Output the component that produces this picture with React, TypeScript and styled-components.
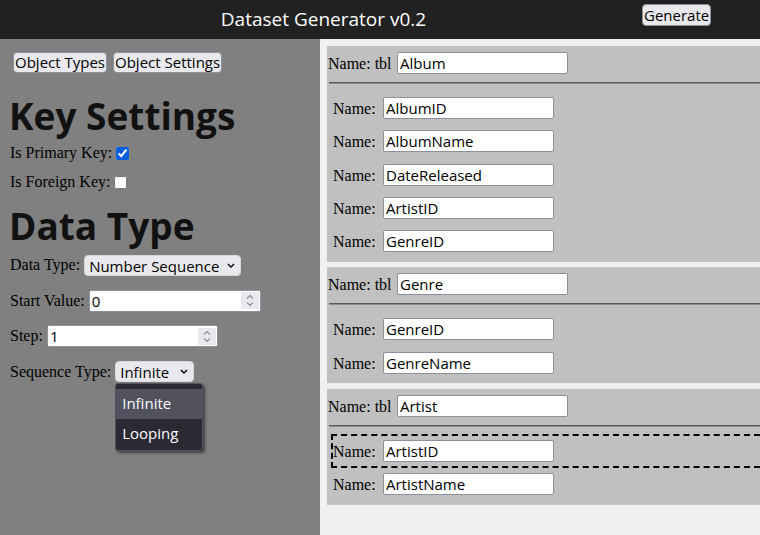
import React from "react";
import styled, { createGlobalStyle } from "styled-components";

const sans = `"Open Sans", "Noto Sans", sans-serif`;

const GlobalStyle = createGlobalStyle`
  html, body { margin: 0; padding: 0; height: 100%; }
  body {
    background: #f0f0f0;
    font-family: "Liberation Serif", "Times New Roman", serif;
    font-size: 16px;
    color: #000;
    overflow: hidden;
  }
  #root { height: 100%; }
  * { box-sizing: border-box; }
`;

const Page = styled.div`
  display: flex;
  flex-direction: column;
  height: 100vh;
  width: 760px;
`;

const Header = styled.header`
  flex: none;
  height: 39px;
  background: #212121;
  display: flex;
  align-items: flex-start;
`;

const Title = styled.h1`
  margin: 0;
  width: 647px;
  text-align: center;
  font-family: ${sans};
  font-weight: 400;
  font-size: 19px;
  line-height: 39px;
  color: #fff;
`;

const Button = styled.button<{ $top?: number; $left?: number; $h?: number }>`
  margin: ${(p) => p.$top ?? 0}px 0 0 ${(p) => p.$left ?? 0}px;
  height: ${(p) => p.$h ?? 21}px;
  padding: 0 1px;
  font-family: ${sans};
  font-size: 15px;
  line-height: 19px;
  color: #000;
  background: #e9e9ed;
  border: 1px solid #8f8f9d;
  border-radius: 4px;
`;

const Body = styled.div`
  flex: 1;
  min-height: 0;
  display: grid;
  grid-template-columns: 320px 1fr;
`;

const Sidebar = styled.aside`
  background: #808080;
  padding: 13px 10px;
`;

const Tabs = styled.div`
  display: flex;
  gap: 6px;
  margin-left: 3px;
`;

const SectionTitle = styled.h2<{ $top: number }>`
  margin: ${(p) => p.$top}px 0 0 -1px;
  font-family: ${sans};
  font-weight: 700;
  font-size: 37px;
  line-height: 40px;
  color: #111;
`;

const CheckRow = styled.div<{ $top: number }>`
  display: flex;
  align-items: center;
  gap: 4px;
  height: 20px;
  margin-top: ${(p) => p.$top}px;
`;

const Label = styled.label`
  line-height: 20px;
  white-space: nowrap;
`;

const Checkbox = styled.input`
  width: 13px;
  height: 13px;
  margin: 0;
  accent-color: #0060df;
`;

const FormRow = styled.div<{ $top: number }>`
  display: flex;
  align-items: center;
  gap: 4px;
  height: 22px;
  margin-top: ${(p) => p.$top}px;
`;

const SelectWrap = styled.div<{ $w: number }>`
  position: relative;
  width: ${(p) => p.$w}px;
  height: 21px;
`;

const Select = styled.select`
  appearance: none;
  width: 100%;
  height: 100%;
  margin: 0;
  padding: 0 0 0 4px;
  font-family: ${sans};
  font-size: 15px;
  color: #000;
  background: #e9e9ed;
  border: 1px solid #d6d6dd;
  border-radius: 4px;
`;

const Chevron = styled.svg`
  position: absolute;
  right: 6px;
  top: 8px;
  pointer-events: none;
`;

const NumberBox = styled.div<{ $w: number }>`
  display: flex;
  align-items: center;
  width: ${(p) => p.$w}px;
  height: 22px;
  padding-right: 1px;
  background: #fff;
  border: 1px solid #8f8f9d;
  border-radius: 2px;
`;

const NumberInput = styled.input`
  flex: 1;
  min-width: 0;
  height: 100%;
  padding: 0 0 0 2px;
  border: 0;
  outline: 0;
  background: transparent;
  font-family: ${sans};
  font-size: 15px;
  color: #000;
`;

const Spinner = styled.span`
  width: 18px;
  height: 17px;
  background: #e9e9ed;
  display: flex;
  flex-direction: column;
  align-items: center;
  justify-content: center;
  gap: 3px;
`;

const Popup = styled.ul`
  position: absolute;
  left: 0;
  top: 22px;
  width: 88px;
  height: 68px;
  margin: 0;
  padding: 5px 0 0;
  list-style: none;
  background: #2b2a33;
  border: 1px solid #55545f;
  border-radius: 3px;
  box-shadow: 2px 2px 3px rgba(0, 0, 0, 0.5);
  font-family: ${sans};
  font-size: 15px;
  color: #fbfbfe;
  z-index: 2;
`;

const PopupOption = styled.li<{ $active?: boolean }>`
  height: 30px;
  line-height: 28px;
  padding-left: 6px;
  background: ${(p) => (p.$active ? "#52525e" : "transparent")};
`;

const Canvas = styled.main`
  padding: 7px 0 0 7px;
  display: flex;
  flex-direction: column;
  gap: 5.5px;
  overflow: hidden;
`;

const Card = styled.section`
  background: #c0c0c0;
  padding: 6px 0 4px 1px;
`;

const CardHeader = styled.div`
  display: flex;
  align-items: baseline;
  height: 22px;
`;

const HeaderLabel = styled.span`
  width: 69px;
  flex: none;
  white-space: nowrap;
`;

const Divider = styled.hr`
  margin: 8px 0 7.5px 1px;
  height: 0;
  border: 0;
  border-top: 1px solid #5a5a5a;
  border-bottom: 1px solid #8c8c8c;
`;

const FieldRow = styled.div<{ $selected?: boolean }>`
  display: flex;
  align-items: baseline;
  margin-left: 3px;
  padding: 3.625px 0;
  border: 2px dashed ${(p) => (p.$selected ? "#000" : "transparent")};
  border-right: 0;
`;

const FieldLabel = styled.span`
  width: 50px;
  flex: none;
`;

const TextInput = styled.input`
  width: 171px;
  height: 22px;
  margin: 0;
  padding: 0 2px;
  font-family: ${sans};
  font-size: 15px;
  color: #000;
  background: #fff;
  border: 1px solid #8f8f9d;
  border-radius: 2px;
`;

const ChevronDown = () => (
  <Chevron width="8" height="5" viewBox="0 0 8 5">
    <polyline points="1,1 4,4 7,1" fill="none" stroke="#000" strokeWidth="1.4" />
  </Chevron>
);

const SpinArrows = () => (
  <Spinner>
    <svg width="8" height="4" viewBox="0 0 8 4">
      <polyline points="1,3.5 4,0.5 7,3.5" fill="none" stroke="#8f8f9d" strokeWidth="1.2" />
    </svg>
    <svg width="8" height="4" viewBox="0 0 8 4">
      <polyline points="1,0.5 4,3.5 7,0.5" fill="none" stroke="#8f8f9d" strokeWidth="1.2" />
    </svg>
  </Spinner>
);

type Table = { name: string; fields: string[]; selected?: number };

const tables: Table[] = [
  { name: "Album", fields: ["AlbumID", "AlbumName", "DateReleased", "ArtistID", "GenreID"] },
  { name: "Genre", fields: ["GenreID", "GenreName"] },
  { name: "Artist", fields: ["ArtistID", "ArtistName"], selected: 0 },
];

export default function App() {
  return (
    <>
      <GlobalStyle />
      <Page>
        <Header>
          <Title>Dataset Generator v0.2</Title>
          <Button $top={4} $left={-5} $h={22}>
            Generate
          </Button>
        </Header>
        <Body>
          <Sidebar>
            <Tabs>
              <Button>Object Types</Button>
              <Button>Object Settings</Button>
            </Tabs>
            <SectionTitle $top={23}>Key Settings</SectionTitle>
            <CheckRow $top={7}>
              <Label>Is Primary Key:</Label>
              <Checkbox type="checkbox" defaultChecked />
            </CheckRow>
            <CheckRow $top={9}>
              <Label>Is Foreign Key:</Label>
              <Checkbox type="checkbox" />
            </CheckRow>
            <SectionTitle $top={14}>Data Type</SectionTitle>
            <FormRow $top={8}>
              <Label>Data Type:</Label>
              <SelectWrap $w={157}>
                <Select defaultValue="seq">
                  <option value="seq">Number Sequence</option>
                  <option value="text">Text</option>
                </Select>
                <ChevronDown />
              </SelectWrap>
            </FormRow>
            <FormRow $top={13.5}>
              <Label>Start Value:</Label>
              <NumberBox $w={172}>
                <NumberInput defaultValue="0" />
                <SpinArrows />
              </NumberBox>
            </FormRow>
            <FormRow $top={13.5}>
              <Label>Step:</Label>
              <NumberBox $w={171}>
                <NumberInput defaultValue="1" />
                <SpinArrows />
              </NumberBox>
            </FormRow>
            <FormRow $top={13.5}>
              <Label>Sequence Type:</Label>
              <SelectWrap $w={79}>
                <Select defaultValue="inf">
                  <option value="inf">Infinite</option>
                  <option value="loop">Looping</option>
                </Select>
                <ChevronDown />
                <Popup>
                  <PopupOption $active>Infinite</PopupOption>
                  <PopupOption>Looping</PopupOption>
                </Popup>
              </SelectWrap>
            </FormRow>
          </Sidebar>
          <Canvas>
            {tables.map((t) => (
              <Card key={t.name}>
                <CardHeader>
                  <HeaderLabel>Name: tbl</HeaderLabel>
                  <TextInput defaultValue={t.name} />
                </CardHeader>
                <Divider />
                {t.fields.map((f, i) => (
                  <FieldRow key={f} $selected={t.selected === i}>
                    <FieldLabel>Name:</FieldLabel>
                    <TextInput defaultValue={f} />
                  </FieldRow>
                ))}
              </Card>
            ))}
          </Canvas>
        </Body>
      </Page>
    </>
  );
}
